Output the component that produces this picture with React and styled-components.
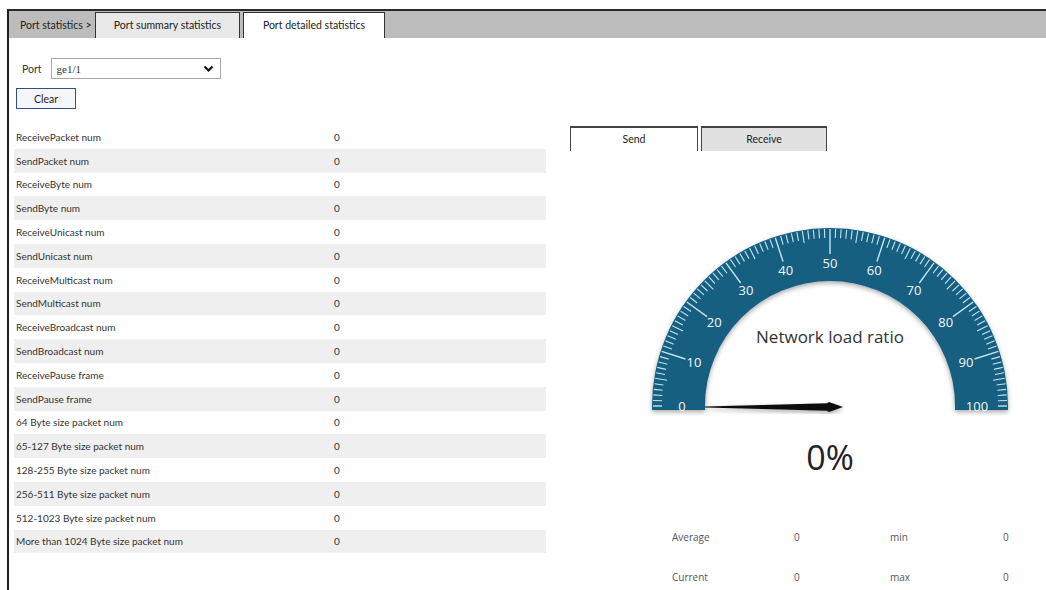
import React from 'react';
import styled, { createGlobalStyle } from 'styled-components';

const GlobalStyle = createGlobalStyle`
  html, body {
    margin: 0;
    padding: 0;
    background: #fff;
    overflow: hidden;
  }
  body {
    font-family: Lato, "Open Sans", sans-serif;
    color: #333;
  }
`;

const Frame = styled.div`
  margin: 9px 0 0 7px;
  height: 581px;
  border-left: 2px solid #1e1e1e;
  border-top: 2px solid #2a2a2a;
  box-sizing: border-box;
`;

const TabBar = styled.div`
  display: flex;
  align-items: flex-end;
  height: 27px;
  background: #bcbcbc;
  padding-left: 11px;
`;

const Crumb = styled.div`
  width: 75px;
  font-size: 10.5px;
  line-height: 26px;
  color: #222;
  white-space: nowrap;
`;

const PageTab = styled.div`
  height: 26px;
  box-sizing: border-box;
  margin-right: 3px;
  font-size: 10.5px;
  line-height: 24px;
  color: #222;
  border: 1px solid #333;
  border-bottom: none;
  background: ${(p) => (p.$active ? '#fff' : '#e8e8e8')};
  width: ${(p) => p.$width}px;
  text-align: center;
  white-space: nowrap;
`;

const Body = styled.div`
  display: flex;
`;

const LeftCol = styled.div`
  width: 532px;
  padding: 20px 0 0 5px;
`;

const PortRow = styled.div`
  display: flex;
  align-items: center;
  padding-left: 8px;
  height: 21px;
`;

const Label = styled.span`
  font-size: 10.5px;
  color: #333;
  margin-right: 9px;
`;

const Select = styled.div`
  display: flex;
  align-items: center;
  justify-content: space-between;
  width: 170px;
  height: 21px;
  box-sizing: border-box;
  border: 1px solid #a9a9a9;
  padding: 0 6px 0 5px;
  font-family: "Liberation Serif", serif;
  font-size: 11px;
  color: #333;
`;

const ClearButton = styled.button`
  margin: 9px 0 0 2px;
  width: 60px;
  height: 21px;
  border: 1px solid #2f4f86;
  background: #f5f7fb;
  font-family: Lato, sans-serif;
  font-size: 10.5px;
  color: #222;
  padding: 0;
`;

const StatTable = styled.div`
  margin-top: 16px;
`;

const StatRow = styled.div`
  display: flex;
  align-items: center;
  height: 23.8px;
  font-size: 10px;
  color: #333;
  background: ${(p) => (p.$striped ? '#efefef' : '#fff')};
`;

const StatName = styled.div`
  width: 318px;
  padding-left: 2px;
`;

const RightCol = styled.div`
  margin-left: 24px;
  padding-top: 88px;
  flex: 1;
`;

const ChartTabs = styled.div`
  display: flex;
  gap: 3px;
`;

const ChartTab = styled.div`
  width: ${(p) => p.$width}px;
  height: 25px;
  box-sizing: border-box;
  border: 1px solid #444;
  border-bottom: none;
  border-top-width: 2px;
  background: ${(p) => (p.$active ? '#fff' : '#e1e1e1')};
  font-size: 10.5px;
  line-height: 23px;
  text-align: center;
  color: #222;
`;

const GaugeSvg = styled.svg`
  display: block;
  margin-top: 8px;
`;

const Summary = styled.div`
  display: grid;
  grid-template-columns: 122px 96px 113px 40px;
  grid-auto-rows: 40px;
  padding: 31px 0 0 102px;
  font-size: 10px;
  color: #555;
  font-family: "Open Sans", sans-serif;
`;

const rows = [
  'ReceivePacket num',
  'SendPacket num',
  'ReceiveByte num',
  'SendByte num',
  'ReceiveUnicast num',
  'SendUnicast num',
  'ReceiveMulticast num',
  'SendMulticast num',
  'ReceiveBroadcast num',
  'SendBroadcast num',
  'ReceivePause frame',
  'SendPause frame',
  '64 Byte size packet num',
  '65-127 Byte size packet num',
  '128-255 Byte size packet num',
  '256-511 Byte size packet num',
  '512-1023 Byte size packet num',
  'More than 1024 Byte size packet num',
];

// gauge geometry in page coordinates
const CX = 830;
const CY = 407;
const R_OUT = 178;
const R_IN = 125;
const R_LABEL = 143;

const polar = (r, v) => {
  const a = Math.PI - (v / 100) * Math.PI;
  return [CX + r * Math.cos(a), CY - r * Math.sin(a)];
};

function Gauge() {
  const ticks = [];
  for (let v = 0; v <= 100; v++) {
    const major = v % 10 === 0;
    const mid = v % 5 === 0;
    const r0 = major ? (v === 0 || v === 100 ? R_OUT - 10 : R_LABEL + 9) : mid ? R_OUT - 13 : R_OUT - 10;
    const [x1, y1] = polar(R_OUT - 1, v);
    const [x2, y2] = polar(r0, v);
    ticks.push(
      <line key={v} x1={x1} y1={y1} x2={x2} y2={y2} stroke="#c4e4f2" strokeWidth={major ? 1.4 : 1.1} />
    );
  }
  const labels = [];
  for (let v = 0; v <= 100; v += 10) {
    let [x, y] = polar(R_LABEL, v);
    if (v === 0) [x, y] = [682, 407];
    if (v === 100) [x, y] = [977, 407];
    labels.push(
      <text key={v} x={x} y={y + 5} textAnchor="middle" fontSize="13" fill="#f2f9fc" fontFamily="'Open Sans', sans-serif">
        {v}
      </text>
    );
  }

  return (
    <GaugeSvg width="476" height="340" viewBox="570 160 476 340">
      <defs>
        <filter id="soft" x="-10%" y="-10%" width="120%" height="130%">
          <feGaussianBlur in="SourceAlpha" stdDeviation="2.5" />
          <feOffset dy="2" />
          <feComponentTransfer>
            <feFuncA type="linear" slope="0.35" />
          </feComponentTransfer>
          <feMerge>
            <feMergeNode />
            <feMergeNode in="SourceGraphic" />
          </feMerge>
        </filter>
      </defs>
      <g filter="url(#soft)">
        <path
          d={`M ${CX - R_OUT} ${CY + 4} L ${CX - R_OUT} ${CY} A ${R_OUT} ${R_OUT} 0 0 1 ${CX + R_OUT} ${CY}
              L ${CX + R_OUT} ${CY + 4} L ${CX + R_IN} ${CY + 4} L ${CX + R_IN} ${CY}
              A ${R_IN} ${R_IN} 0 0 0 ${CX - R_IN} ${CY} L ${CX - R_IN} ${CY + 4} Z`}
          fill="#165f80"
        />
      </g>
      {ticks}
      {labels}
      <text x={CX} y={344} textAnchor="middle" fontSize="17" fill="#333" fontFamily="'Open Sans', sans-serif">
        Network load ratio
      </text>
      <g filter="url(#soft)">
        <polygon points="705,407.6 827,404.2 829,403 843,408 829,413 827,411.8 705,408.4" fill="#111" />
      </g>
      <text x={CX} y={471} textAnchor="middle" fontSize="34" fill="#222" fontFamily="'Open Sans', sans-serif">
        0%
      </text>
    </GaugeSvg>
  );
}

function App() {
  return (
    <>
      <GlobalStyle />
      <Frame>
        <TabBar>
          <Crumb>Port statistics &gt;</Crumb>
          <PageTab $width={145}>Port summary statistics</PageTab>
          <PageTab $width={142} $active>Port detailed statistics</PageTab>
        </TabBar>
        <Body>
          <LeftCol>
            <PortRow>
              <Label>Port</Label>
              <Select>
                <span>ge1/1</span>
                <svg width="11" height="8" viewBox="0 0 11 8">
                  <path d="M1.5 1.5 L5.5 5.5 L9.5 1.5" fill="none" stroke="#111" strokeWidth="2.2" />
                </svg>
              </Select>
            </PortRow>
            <ClearButton>Clear</ClearButton>
            <StatTable>
              {rows.map((name, i) => (
                <StatRow key={name} $striped={i % 2 === 1}>
                  <StatName>{name}</StatName>
                  <span>0</span>
                </StatRow>
              ))}
            </StatTable>
          </LeftCol>
          <RightCol>
            <ChartTabs>
              <ChartTab $width={128} $active>Send</ChartTab>
              <ChartTab $width={126}>Receive</ChartTab>
            </ChartTabs>
            <Gauge />
            <Summary>
              <span>Average</span>
              <span>0</span>
              <span>min</span>
              <span>0</span>
              <span>Current</span>
              <span>0</span>
              <span>max</span>
              <span>0</span>
            </Summary>
          </RightCol>
        </Body>
      </Frame>
    </>
  );
}

export default App;
